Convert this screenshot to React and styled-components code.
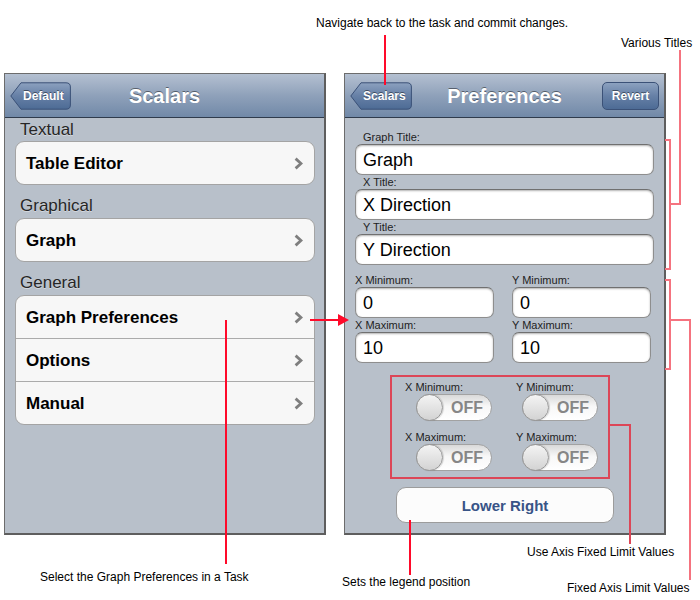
import React from 'react';
import styled, { createGlobalStyle } from 'styled-components';

const GlobalStyle = createGlobalStyle`
  body {
    margin: 0;
    background: #fff;
    font-family: "Liberation Sans", Arial, sans-serif;
  }
`;

const STRONG = '#ff0a2a';
const SOFT = '#f5737f';
const BOX = '#dc4657';

const Chevron = () => (
  <svg width="9" height="13" viewBox="0 0 9 13">
    <path d="M1.6 1.6 L7 6.5 L1.6 11.4" fill="none" stroke="#7f7f7f" strokeWidth="2.8" />
  </svg>
);

const BackShape = ({ width }) => (
  <svg width={width} height="28" viewBox={`0 0 ${width} 28`}>
    <defs>
      <linearGradient id="btnfill" x1="0" y1="0" x2="0" y2="1">
        <stop offset="0" stopColor="#8ca1bf" />
        <stop offset="0.5" stopColor="#6680a6" />
        <stop offset="1" stopColor="#4d6b95" />
      </linearGradient>
    </defs>
    <path
      d={`M0.8 14 L11 0.8 H${width - 5} Q${width - 0.6} 0.8 ${width - 0.6} 5 V23 Q${width - 0.6} 27.2 ${width - 5} 27.2 H11 Z`}
      fill="url(#btnfill)"
      stroke="#3b5177"
      strokeWidth="1"
    />
  </svg>
);

const Page = styled.div`
  position: relative;
  width: 700px;
  height: 600px;
  overflow: hidden;
`;

const Screens = styled.div`
  display: flex;
  gap: 18px;
  padding: 73px 0 0 4px;
`;

const Screen = styled.div`
  width: 322px;
  height: 462px;
  box-sizing: border-box;
  border: 1px solid #6c6c6c;
  border-right: 2px solid #5e5e5e;
  border-bottom: 2px solid #5e5e5e;
  background: #b8c0ca;
  display: flex;
  flex-direction: column;
`;

const NavBar = styled.div`
  height: 44px;
  box-sizing: border-box;
  background: linear-gradient(#b4c0d1, #8fa1ba 50%, #7189a8);
  border-bottom: 1px solid #2f3b4c;
  display: grid;
  grid-template-columns: 1fr auto 1fr;
  align-items: center;
  padding: 0 5px;
`;

const Title = styled.div`
  padding-top: 2px;
  color: #fff;
  font-weight: bold;
  font-size: 20px;
  text-shadow: 0 -1px 0 rgba(0, 0, 0, 0.45);
`;

const BackButton = styled.div`
  position: relative;
  width: ${p => p.$w}px;
  height: 28px;
  justify-self: start;

  svg {
    position: absolute;
    left: 0;
    top: 0;
  }

  span {
    position: relative;
    display: block;
    padding-left: 13px;
    line-height: 28px;
    color: #fff;
    font-weight: bold;
    font-size: 12px;
    text-shadow: 0 -1px 0 rgba(0, 0, 0, 0.45);
  }
`;

const BarButton = styled.div`
  justify-self: end;
  width: 57px;
  height: 28px;
  box-sizing: border-box;
  border: 1px solid #3b5177;
  border-radius: 5px;
  background: linear-gradient(#8ca1bf, #6680a6 50%, #4d6b95);
  color: #fff;
  font-weight: bold;
  font-size: 12px;
  line-height: 26px;
  text-align: center;
  text-shadow: 0 -1px 0 rgba(0, 0, 0, 0.45);
`;

const TableContent = styled.div`
  padding: 0 9px 0 10px;
`;

const SectionHeader = styled.div`
  padding: ${p => (p.$first ? 1 : 10)}px 0 0 5px;
  margin-bottom: ${p => (p.$first ? 1 : 2)}px;
  font-size: 17px;
  line-height: 21px;
  color: #262626;
  text-shadow: 0 1px 0 rgba(255, 255, 255, 0.4);
`;

const Group = styled.div`
  background: #f7f7f7;
  border: 1px solid #a4a4a4;
  border-radius: 9px;
  overflow: hidden;
`;

const Row = styled.div`
  height: 42px;
  display: flex;
  align-items: center;
  justify-content: space-between;
  padding: 1px 11px 0 10px;
  box-sizing: border-box;
  font-weight: bold;
  font-size: 17px;
  color: #000;

  & + & {
    height: 43px;
    border-top: 1px solid #ababab;
  }
`;

const FormContent = styled.div`
  padding: 12px 10px 0 10px;
  display: flex;
  flex-direction: column;
`;

const FieldLabel = styled.div`
  padding-left: ${p => p.$indent || 0}px;
  font-size: 11px;
  line-height: 14px;
  color: #1e1e1e;
`;

const Field = styled.div`
  height: 31px;
  box-sizing: border-box;
  border: 1px solid #8e8e8e;
  border-top-color: #707070;
  border-radius: 7px;
  background: #fff;
  box-shadow: inset 0 1px 2px rgba(0, 0, 0, 0.3);
  display: flex;
  align-items: center;
  padding: 2px 0 0 7px;
  font-size: 18px;
  color: #000;
`;

const LimitGrid = styled.div`
  margin-top: 8px;
  display: grid;
  grid-template-columns: 139px 139px;
  column-gap: 18px;
  width: 297px;
`;

const SwitchGrid = styled.div`
  margin: 17px 0 0 50px;
  display: grid;
  grid-template-columns: 111px 111px;
  row-gap: 9px;
`;

const SwitchCell = styled.div`
  display: flex;
  flex-direction: column;
`;

const Switch = styled.div`
  margin-left: ${p => p.$offset}px;
  width: 76px;
  height: 27px;
  box-sizing: border-box;
  border: 1px solid #a2a2a2;
  border-radius: 14px;
  background: linear-gradient(#d9d9d9, #f7f7f7 45%, #fff);
  display: flex;
  align-items: center;
`;

const Knob = styled.div`
  width: 27px;
  height: 27px;
  margin-left: -1px;
  box-sizing: border-box;
  border-radius: 50%;
  border: 1px solid #979797;
  background: linear-gradient(#f4f4f4, #d3d3d3);
  box-shadow: 1px 0 1px rgba(0, 0, 0, 0.15);
`;

const SwitchText = styled.div`
  flex: 1;
  padding-top: 1px;
  text-align: center;
  font-weight: bold;
  font-size: 16px;
  color: #868686;
`;

const WideButton = styled.div`
  margin: 16px 0 0 41px;
  width: 218px;
  height: 36px;
  box-sizing: border-box;
  border: 1px solid #9c9c9c;
  border-radius: 10px;
  background: #fcfcfc;
  display: flex;
  align-items: center;
  justify-content: center;
  padding-top: 1px;
  font-weight: bold;
  font-size: 15px;
  color: #385487;
`;

const Line = styled.div`
  position: absolute;
  left: ${p => p.$x}px;
  top: ${p => p.$y}px;
  width: ${p => p.$w}px;
  height: ${p => p.$h}px;
  background: ${p => p.$c};
`;

const ArrowHead = styled.div`
  position: absolute;
  left: 338px;
  top: 314px;
  width: 0;
  height: 0;
  border-top: 6px solid transparent;
  border-bottom: 6px solid transparent;
  border-left: 11px solid ${STRONG};
`;

const OutlineBox = styled.div`
  position: absolute;
  left: 390px;
  top: 375px;
  width: 220px;
  height: 104px;
  box-sizing: border-box;
  border: 2px solid ${BOX};
`;

const Note = styled.div`
  position: absolute;
  left: ${p => p.$x}px;
  top: ${p => p.$y}px;
  font-size: 12px;
  line-height: 14px;
  color: #000;
  white-space: nowrap;
`;

const lines = [
  // back button callout
  { x: 384, y: 35, w: 2, h: 50, c: STRONG },
  // row to preferences arrow
  { x: 310, y: 319, w: 30, h: 2, c: STRONG },
  { x: 225, y: 320, w: 2, h: 244, c: STRONG },
  { x: 409, y: 520, w: 2, h: 55, c: STRONG },
  // various titles bracket
  { x: 679, y: 50, w: 2, h: 155, c: SOFT },
  { x: 669, y: 203, w: 12, h: 2, c: SOFT },
  { x: 669, y: 139, w: 2, h: 131, c: SOFT },
  { x: 665, y: 139, w: 6, h: 2, c: SOFT },
  { x: 665, y: 268, w: 6, h: 2, c: SOFT },
  // fixed axis bracket
  { x: 669, y: 279, w: 2, h: 91, c: SOFT },
  { x: 665, y: 279, w: 6, h: 2, c: SOFT },
  { x: 665, y: 368, w: 6, h: 2, c: SOFT },
  { x: 669, y: 319, w: 22, h: 2, c: SOFT },
  { x: 689, y: 319, w: 2, h: 261, c: SOFT },
  // switch box connector
  { x: 610, y: 424, w: 21, h: 2, c: BOX },
  { x: 629, y: 424, w: 2, h: 120, c: BOX },
];

const notes = [
  { x: 316, y: 16, text: 'Navigate back to the task and commit changes.' },
  { x: 621, y: 36, text: 'Various Titles' },
  { x: 40, y: 570, text: 'Select the Graph Preferences in a Task' },
  { x: 342, y: 575, text: 'Sets the legend position' },
  { x: 527, y: 545, text: 'Use Axis Fixed Limit Values' },
  { x: 567, y: 581, text: 'Fixed Axis Limit Values' },
];

const sections = [
  { title: 'Textual', rows: ['Table Editor'] },
  { title: 'Graphical', rows: ['Graph'] },
  { title: 'General', rows: ['Graph Preferences', 'Options', 'Manual'] },
];

const titles = [
  { label: 'Graph Title:', value: 'Graph' },
  { label: 'X Title:', value: 'X Direction' },
  { label: 'Y Title:', value: 'Y Direction' },
];

const limits = [
  ['X Minimum:', '0', 'Y Minimum:', '0'],
  ['X Maximum:', '10', 'Y Maximum:', '10'],
];

const switches = [
  { label: 'X Minimum:', offset: 11 },
  { label: 'Y Minimum:', offset: 6 },
  { label: 'X Maximum:', offset: 11 },
  { label: 'Y Maximum:', offset: 6 },
];

export default function App() {
  return (
    <Page>
      <GlobalStyle />
      <Screens>
        <Screen>
          <NavBar>
            <BackButton $w={61}>
              <BackShape width={61} />
              <span>Default</span>
            </BackButton>
            <Title>Scalars</Title>
            <div />
          </NavBar>
          <TableContent>
            {sections.map((s, i) => (
              <React.Fragment key={s.title}>
                <SectionHeader $first={i === 0}>{s.title}</SectionHeader>
                <Group>
                  {s.rows.map(r => (
                    <Row key={r}>
                      {r}
                      <Chevron />
                    </Row>
                  ))}
                </Group>
              </React.Fragment>
            ))}
          </TableContent>
        </Screen>

        <Screen>
          <NavBar>
            <BackButton $w={62}>
              <BackShape width={62} />
              <span>Scalars</span>
            </BackButton>
            <Title>Preferences</Title>
            <BarButton>Revert</BarButton>
          </NavBar>
          <FormContent>
            {titles.map(t => (
              <React.Fragment key={t.label}>
                <FieldLabel $indent={8}>{t.label}</FieldLabel>
                <Field>{t.value}</Field>
              </React.Fragment>
            ))}
            <LimitGrid>
              {limits.map(row => (
                <React.Fragment key={row[0]}>
                  <FieldLabel>{row[0]}</FieldLabel>
                  <FieldLabel>{row[2]}</FieldLabel>
                  <Field>{row[1]}</Field>
                  <Field>{row[3]}</Field>
                </React.Fragment>
              ))}
            </LimitGrid>
            <SwitchGrid>
              {switches.map(s => (
                <SwitchCell key={s.label}>
                  <FieldLabel>{s.label}</FieldLabel>
                  <Switch $offset={s.offset}>
                    <Knob />
                    <SwitchText>OFF</SwitchText>
                  </Switch>
                </SwitchCell>
              ))}
            </SwitchGrid>
            <WideButton>Lower Right</WideButton>
          </FormContent>
        </Screen>
      </Screens>

      <OutlineBox />
      {lines.map((l, i) => (
        <Line key={i} $x={l.x} $y={l.y} $w={l.w} $h={l.h} $c={l.c} />
      ))}
      <ArrowHead />
      {notes.map(n => (
        <Note key={n.text} $x={n.x} $y={n.y}>{n.text}</Note>
      ))}
    </Page>
  );
}
